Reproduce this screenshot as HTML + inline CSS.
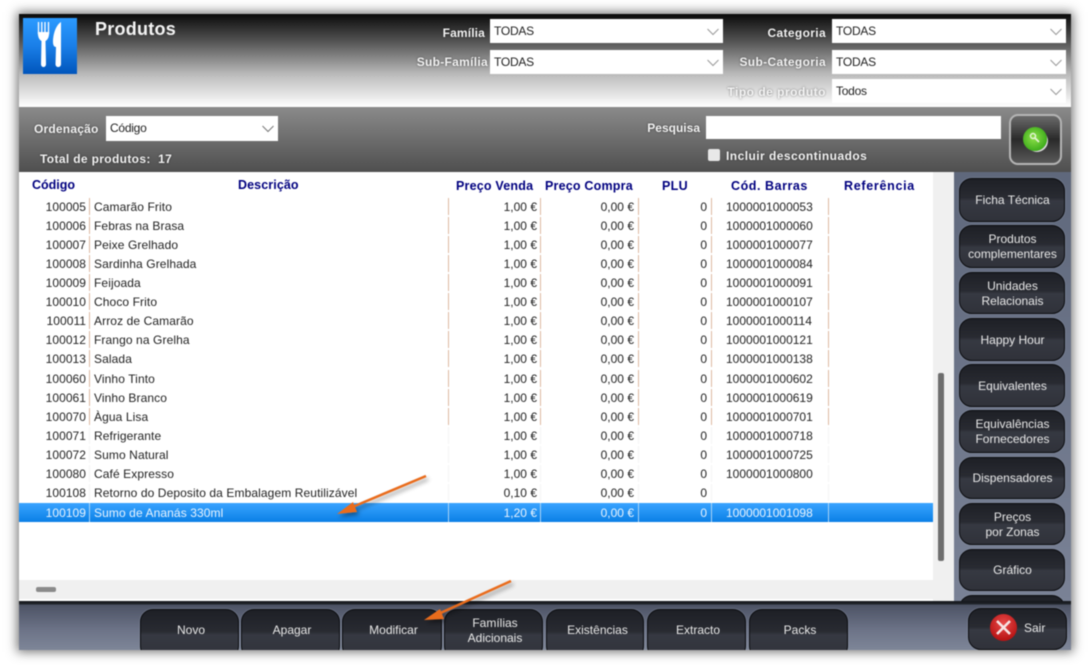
<!DOCTYPE html>
<html><head><meta charset="utf-8"><style>
html,body{margin:0;padding:0;width:1089px;height:665px;overflow:hidden;background:#fff}
*{box-sizing:border-box}
body{font-family:"Liberation Sans",sans-serif;font-size:12px;color:#222}
#w{position:absolute;left:0;top:0;width:1089px;height:665px;filter:blur(.5px)}
.a{position:absolute}
#win{position:absolute;left:19px;top:14px;width:1052px;height:636px;box-shadow:0 0 10px 2px rgba(60,60,60,.7);background:#fff;overflow:hidden}
#hd{position:absolute;left:19px;top:14px;width:1052px;height:93px;background:linear-gradient(#0a0a0a 0,#555 30%,#bbb 65%,#fff 100%)}
#gr{position:absolute;left:19px;top:107px;width:1052px;height:65px;background:linear-gradient(#8a8a8a,#4f4f4f)}
.lb{position:absolute;font-weight:bold;color:#f2f2f2;font-size:12px;text-align:right;white-space:nowrap;text-shadow:0 0 2px rgba(0,0,0,.5)}
.sel{position:absolute;background:#fff;height:24px;font-size:12px;line-height:25px;padding-left:4px;color:#222;letter-spacing:-.25px}
.sel svg{position:absolute;right:3px;top:9px}
.h{position:absolute;top:178px;font-weight:bold;color:#00007f;font-size:12.5px;white-space:nowrap}
.r{position:absolute;left:19px;width:914px;height:19px;line-height:21px;--c:#dcb9a0;
background:linear-gradient(var(--c),var(--c)) 70px 1px/1px 17px no-repeat,linear-gradient(var(--c),var(--c)) 429px 1px/1px 17px no-repeat,linear-gradient(var(--c),var(--c)) 521px 1px/1px 17px no-repeat,linear-gradient(var(--c),var(--c)) 619px 1px/1px 17px no-repeat,linear-gradient(var(--c),var(--c)) 692px 1px/1px 17px no-repeat,linear-gradient(var(--c),var(--c)) 809px 1px/1px 17px no-repeat}
.r span{position:absolute;top:0;white-space:nowrap}
.r .c{right:847px;letter-spacing:.05px}.r .d{left:75px;letter-spacing:.1px}.r .p{right:396px}.r .q{right:299px}.r .u{right:226px}.r .b{left:707px}
.n{--c:#f4f4f4}.t{--c:#d8d8d8}
.sl{background-color:transparent;color:#e8f4ff;--c:#a9d3f5;background-image:linear-gradient(var(--c),var(--c)),linear-gradient(var(--c),var(--c)),linear-gradient(var(--c),var(--c)),linear-gradient(var(--c),var(--c)),linear-gradient(var(--c),var(--c)),linear-gradient(var(--c),var(--c)),linear-gradient(#3aa4ff,#0a7fe6)!important;background-position:70px 0,429px 0,521px 0,619px 0,692px 0,809px 0,0 0;background-size:1px 19px,1px 19px,1px 19px,1px 19px,1px 19px,1px 19px,100% 100%;background-repeat:no-repeat}
.btn{position:absolute;border-radius:13px;border:1px solid #0c0d10;box-shadow:0 0 0 1px rgba(150,158,175,.25);background:linear-gradient(#1e2026 0,#292b32 45%,#363942 52%,#30323a 100%);color:#e8e8e8;font-size:12px;line-height:15px;text-align:center;display:flex;align-items:center;justify-content:center;padding:1px 0 0 1px}
</style></head><body><div id="w">
<div id="win"></div>
<div id="hd"></div>
<div id="gr"></div>

<div class="a" style="left:23px;top:18px;width:54px;height:56px;background:linear-gradient(#2c9bff,#1a7fe8 50%,#0055bb)"></div>
<svg class="a" style="left:23px;top:18px" width="54" height="56" viewBox="0 0 54 56"><path d="M15.500 4v12M18.800 4v12M22 4v12M25.500 4v12" stroke="#fff" stroke-width="1.300"/><path d="M14.800 14c0 6 2 8 3.700 9l-.5 23c0 4 5 4 5 0l-.5-23c1.700-1 3.700-3 3.700-9z" fill="#fff"/><path d="M38 4c-5 3-8 12-8 20 0 3 1 5 3 5l-.5 17c0 4 5.500 4 5.500 0z" fill="#fff"/></svg>
<div class="a" style="left:95px;top:19px;font-size:18px;font-weight:bold;color:#f4f4f4;letter-spacing:.25px">Produtos</div>

<div class="lb" style="right:604px;top:26px;letter-spacing:.15px">Família</div>
<div class="lb" style="right:601px;top:55px;letter-spacing:.3px">Sub-Família</div>
<div class="lb" style="right:263px;top:26px;letter-spacing:.35px">Categoria</div>
<div class="lb" style="right:263px;top:55px;letter-spacing:.35px">Sub-Categoria</div>
<div class="lb" style="right:263px;top:85px;color:#f5f5f5;letter-spacing:.5px">Tipo de produto</div>
<div class="sel" style="left:490px;top:19px;width:233px">TODAS<svg width="14" height="8"><path d="M1.500 1l5.500 5.500 5.500-5.500" fill="none" stroke="#999" stroke-width="1"/></svg></div>
<div class="sel" style="left:490px;top:50px;width:233px">TODAS<svg width="14" height="8"><path d="M1.500 1l5.500 5.500 5.500-5.500" fill="none" stroke="#999" stroke-width="1"/></svg></div>
<div class="sel" style="left:832px;top:19px;width:234px">TODAS<svg width="14" height="8"><path d="M1.500 1l5.500 5.500 5.500-5.500" fill="none" stroke="#999" stroke-width="1"/></svg></div>
<div class="sel" style="left:832px;top:50px;width:234px">TODAS<svg width="14" height="8"><path d="M1.500 1l5.500 5.500 5.500-5.500" fill="none" stroke="#999" stroke-width="1"/></svg></div>
<div class="sel" style="left:832px;top:79px;width:234px">Todos<svg width="14" height="8"><path d="M1.500 1l5.500 5.500 5.500-5.500" fill="none" stroke="#999" stroke-width="1"/></svg></div>

<div class="lb" style="left:34px;top:122px;letter-spacing:.2px">Ordenação</div>
<div class="sel" style="left:106px;top:116px;width:172px;height:25px">Código<svg width="14" height="8"><path d="M1.500 1l5.500 5.500 5.500-5.500" fill="none" stroke="#777" stroke-width="1"/></svg></div>
<div class="lb" style="left:40px;top:152px;letter-spacing:.35px">Total de produtos:&nbsp; 17</div>
<div class="lb" style="right:389px;top:121px">Pesquisa</div>
<div class="a" style="left:706px;top:116px;width:295px;height:23px;background:#fff"></div>
<div class="a" style="left:708px;top:149px;width:12px;height:12px;background:#e8e8e8;border-radius:2px"></div>
<div class="lb" style="left:726px;top:149px;letter-spacing:.45px">Incluir descontinuados</div>
<div class="a" style="left:1009px;top:114px;width:53px;height:51px;border:2px solid #b5b5b5;border-radius:9px;background:linear-gradient(#6b6b6b,#2a2a2a 50%,#5a5a5a)"></div>
<div class="a" style="left:1023px;top:127px;width:24px;height:24px;border-radius:50%;background:radial-gradient(circle at 45% 45%,#8fe04a,#3fae1c 70%);box-shadow:2px 2px 0 -1px #ddd"></div>
<svg class="a" style="left:1023px;top:127px" width="24" height="24"><circle cx="10" cy="9" r="2.500" fill="none" stroke="#e4f5d4" stroke-width="1.500"/><path d="M12 11l4 4" stroke="#e4f5d4" stroke-width="1.800"/></svg>

<div class="a" style="left:19px;top:172px;width:1052px;height:429px;background:#fff"></div>
<div class="a" style="left:933px;top:172px;width:21px;height:429px;background:#f0f0f0"></div>
<div class="a" style="left:938px;top:373px;width:6px;height:188px;background:#6e6e6e;border-radius:2px"></div>
<div class="a" style="left:19px;top:580px;width:935px;height:19px;background:#f0f0f0"></div>
<div class="a" style="left:36px;top:587px;width:20px;height:5px;background:#8a8a8a;border-radius:2px"></div>

<div class="h" style="left:32px">Código</div>
<div class="h" style="left:238px;letter-spacing:.1px">Descrição</div>
<div class="h" style="left:456px;top:179px;letter-spacing:.2px">Preço Venda</div>
<div class="h" style="left:545px;top:179px;letter-spacing:.2px">Preço Compra</div>
<div class="h" style="left:662px;top:179px;letter-spacing:.3px">PLU</div>
<div class="h" style="left:731px;top:179px;letter-spacing:.55px">Cód. Barras</div>
<div class="h" style="left:844px;top:179px;letter-spacing:.7px">Referência</div>

<div class="r" style="top:197px"><span class="c">100005</span><span class="d">Camarão Frito</span><span class="p">1,00 €</span><span class="q">0,00 €</span><span class="u">0</span><span class="b">1000001000053</span></div>
<div class="r" style="top:216px"><span class="c">100006</span><span class="d">Febras na Brasa</span><span class="p">1,00 €</span><span class="q">0,00 €</span><span class="u">0</span><span class="b">1000001000060</span></div>
<div class="r" style="top:235px"><span class="c">100007</span><span class="d">Peixe Grelhado</span><span class="p">1,00 €</span><span class="q">0,00 €</span><span class="u">0</span><span class="b">1000001000077</span></div>
<div class="r" style="top:254px"><span class="c">100008</span><span class="d">Sardinha Grelhada</span><span class="p">1,00 €</span><span class="q">0,00 €</span><span class="u">0</span><span class="b">1000001000084</span></div>
<div class="r" style="top:273px"><span class="c">100009</span><span class="d">Feijoada</span><span class="p">1,00 €</span><span class="q">0,00 €</span><span class="u">0</span><span class="b">1000001000091</span></div>
<div class="r" style="top:292px"><span class="c">100010</span><span class="d">Choco Frito</span><span class="p">1,00 €</span><span class="q">0,00 €</span><span class="u">0</span><span class="b">1000001000107</span></div>
<div class="r" style="top:311px"><span class="c">100011</span><span class="d">Arroz de Camarão</span><span class="p">1,00 €</span><span class="q">0,00 €</span><span class="u">0</span><span class="b">1000001000114</span></div>
<div class="r" style="top:330px"><span class="c">100012</span><span class="d">Frango na Grelha</span><span class="p">1,00 €</span><span class="q">0,00 €</span><span class="u">0</span><span class="b">1000001000121</span></div>
<div class="r" style="top:349px"><span class="c">100013</span><span class="d">Salada</span><span class="p">1,00 €</span><span class="q">0,00 €</span><span class="u">0</span><span class="b">1000001000138</span></div>
<div class="r" style="top:369px"><span class="c">100060</span><span class="d">Vinho Tinto</span><span class="p">1,00 €</span><span class="q">0,00 €</span><span class="u">0</span><span class="b">1000001000602</span></div>
<div class="r" style="top:388px"><span class="c">100061</span><span class="d">Vinho Branco</span><span class="p">1,00 €</span><span class="q">0,00 €</span><span class="u">0</span><span class="b">1000001000619</span></div>
<div class="r" style="top:407px"><span class="c">100070</span><span class="d">Àgua Lisa</span><span class="p">1,00 €</span><span class="q">0,00 €</span><span class="u">0</span><span class="b">1000001000701</span></div>
<div class="r n" style="top:426px"><span class="c">100071</span><span class="d">Refrigerante</span><span class="p">1,00 €</span><span class="q">0,00 €</span><span class="u">0</span><span class="b">1000001000718</span></div>
<div class="r n" style="top:445px"><span class="c">100072</span><span class="d">Sumo Natural</span><span class="p">1,00 €</span><span class="q">0,00 €</span><span class="u">0</span><span class="b">1000001000725</span></div>
<div class="r n" style="top:464px"><span class="c">100080</span><span class="d">Café Expresso</span><span class="p">1,00 €</span><span class="q">0,00 €</span><span class="u">0</span><span class="b">1000001000800</span></div>
<div class="r n" style="top:483px"><span class="c">100108</span><span class="d">Retorno do Deposito da Embalagem Reutilizável</span><span class="p">0,10 €</span><span class="q">0,00 €</span><span class="u">0</span></div>
<div class="r sl" style="top:503px"><span class="c">100109</span><span class="d">Sumo de Ananás 330ml</span><span class="p">1,20 €</span><span class="q">0,00 €</span><span class="u">0</span><span class="b">1000001001098</span></div>

<div class="a" style="left:954px;top:172px;width:117px;height:429px;background:linear-gradient(#5f687c,#7a8296);overflow:hidden">
<div class="btn" style="left:5px;top:6px;width:106px;height:44px">Ficha Técnica</div>
<div class="btn" style="left:5px;top:53px;width:106px;height:43px">Produtos<br>complementares</div>
<div class="btn" style="left:5px;top:100px;width:106px;height:42px">Unidades<br>Relacionais</div>
<div class="btn" style="left:5px;top:146px;width:106px;height:43px">Happy Hour</div>
<div class="btn" style="left:5px;top:192px;width:106px;height:43px">Equivalentes</div>
<div class="btn" style="left:5px;top:238px;width:106px;height:43px">Equivalências<br>Fornecedores</div>
<div class="btn" style="left:5px;top:285px;width:106px;height:42px">Dispensadores</div>
<div class="btn" style="left:5px;top:331px;width:106px;height:42px">Preços<br>por Zonas</div>
<div class="btn" style="left:5px;top:377px;width:106px;height:42px">Gráfico</div>
<div class="btn" style="left:5px;top:423px;width:106px;height:42px"></div>
</div>

<div class="a" style="left:19px;top:601px;width:1052px;height:49px;background:linear-gradient(#15171c 0,#1f2228 3px,#4d5365 4px,#6d7488 60%,#7e8698);overflow:hidden">
<div class="btn" style="left:121px;top:8px;width:99px;height:50px;padding:0 0 7px 3px">Novo</div>
<div class="btn" style="left:222px;top:8px;width:99px;height:50px;padding:0 0 7px 3px">Apagar</div>
<div class="btn" style="left:323px;top:8px;width:100px;height:50px;padding:0 0 7px 3px">Modificar</div>
<div class="btn" style="left:425px;top:8px;width:99px;height:50px;padding:0 0 7px 3px">Famílias<br>Adicionais</div>
<div class="btn" style="left:527px;top:8px;width:98px;height:50px;padding:0 0 7px 5px">Existências</div>
<div class="btn" style="left:628px;top:8px;width:99px;height:50px;padding:0 0 7px 3px">Extracto</div>
<div class="btn" style="left:730px;top:8px;width:99px;height:50px;padding:0 0 7px 3px">Packs</div>
<div class="btn" style="left:949px;top:7px;width:99px;height:42px;padding:0 0 2px 55px;justify-content:flex-start">Sair</div>
</div>
<div class="a" style="left:990px;top:614px;width:27px;height:27px;border-radius:50%;background:radial-gradient(circle at 50% 35%,#e84a4a,#b81414 75%)"></div>
<svg class="a" style="left:990px;top:614px" width="27" height="27"><path d="M7 7l13 13M20 7L7 20" stroke="#f6e4e4" stroke-width="2.600"/></svg>

<svg class="a" style="left:0;top:0" width="1089" height="665">
<defs><filter id="sh" x="-20%" y="-20%" width="150%" height="150%"><feDropShadow dx="2" dy="3" stdDeviation="2" flood-color="#000" flood-opacity=".4"/></filter></defs>
<g filter="url(#sh)"><path d="M426 476L350 508" stroke="#e96c1d" stroke-width="2.500" fill="none"/><path d="M337 514L353 502 357 512z" fill="#e96c1d"/></g>
<g filter="url(#sh)"><path d="M511 581L436 615" stroke="#e96c1d" stroke-width="2.500" fill="none"/><path d="M424 620L440 609 444 619z" fill="#e96c1d"/></g>
</svg>
</div></body></html>
